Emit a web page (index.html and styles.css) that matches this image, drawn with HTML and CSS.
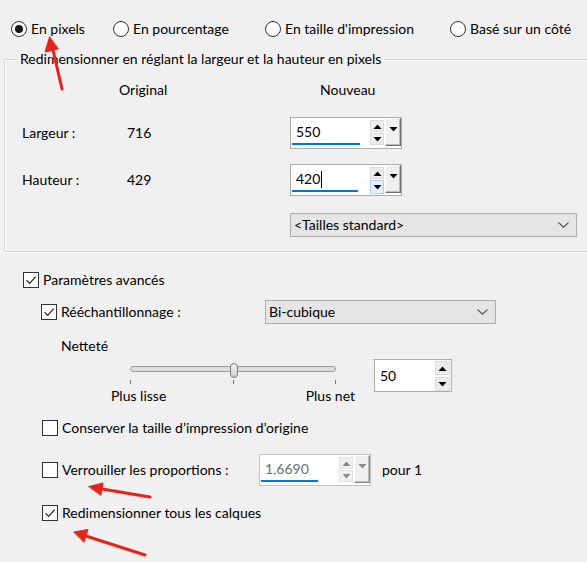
FILE: index.html
```html
<!DOCTYPE html>
<html lang="fr">
<head>
<meta charset="utf-8">
<title>Redimensionner</title>
<link rel="stylesheet" href="styles.css">
</head>
<body>
<div class="radios">
  <label class="radio-item"><span class="radio checked"></span><span>En pixels</span></label>
  <label class="radio-item"><span class="radio"></span><span>En pourcentage</span></label>
  <label class="radio-item"><span class="radio"></span><span>En taille d'impression</span></label>
  <label class="radio-item"><span class="radio"></span><span>Basé sur un côté</span></label>
</div>

<fieldset class="group">
  <legend class="group-title">Redimensionner en réglant la largeur et la hauteur en pixels</legend>
  <div class="dim-head">
    <span class="head-spacer"></span>
    <span class="head-orig">Original</span>
    <span class="head-new">Nouveau</span>
  </div>
  <div class="dim-row">
    <span class="dim-label">Largeur :</span>
    <span class="dim-orig">716</span>
    <div class="spin">
      <div class="spin-field"><span class="spin-text">550</span><span class="spin-line w68"></span></div>
      <div class="spin-btns">
        <span class="sbtn"><svg width="9" height="5" viewBox="0 0 9 5"><path d="M0.5 5 L4.5 0.5 L8.5 5 Z" fill="#000"/></svg></span>
        <span class="sbtn"><svg width="9" height="5" viewBox="0 0 9 5"><path d="M0.5 0 L4.5 4.5 L8.5 0 Z" fill="#000"/></svg></span>
      </div>
      <span class="drop-btn"><svg width="9" height="5" viewBox="0 0 9 5"><path d="M0.5 0 L4.5 4.5 L8.5 0 Z" fill="#000"/></svg></span>
    </div>
  </div>
  <div class="dim-row second">
    <span class="dim-label">Hauteur :</span>
    <span class="dim-orig">429</span>
    <div class="spin">
      <div class="spin-field"><span class="spin-text">420<span class="caret"></span></span><span class="spin-line w66"></span></div>
      <div class="spin-btns">
        <span class="sbtn"><svg width="9" height="5" viewBox="0 0 9 5"><path d="M0.5 5 L4.5 0.5 L8.5 5 Z" fill="#000"/></svg></span>
        <span class="sbtn hover"><svg width="9" height="5" viewBox="0 0 9 5"><path d="M0.5 0 L4.5 4.5 L8.5 0 Z" fill="#000"/></svg></span>
      </div>
      <span class="drop-btn"><svg width="9" height="5" viewBox="0 0 9 5"><path d="M0.5 0 L4.5 4.5 L8.5 0 Z" fill="#000"/></svg></span>
    </div>
  </div>
  <div class="combo std">
    <span>&lt;Tailles standard&gt;</span>
    <svg width="11" height="6" viewBox="0 0 11 6"><path d="M0.5 0.5 L5.5 5.2 L10.5 0.5" fill="none" stroke="#555" stroke-width="1.1"/></svg>
  </div>
</fieldset>

<div class="adv">
  <div class="cb-row">
    <span class="cb"><svg width="14" height="14" viewBox="0 0 14 14"><path d="M2.5 7.2 L5.6 10.3 L11.8 3.6" fill="none" stroke="#222" stroke-width="1.2"/></svg></span>
    <span>Paramètres avancés</span>
  </div>

  <div class="resample-row">
    <div class="cb-row resample-label">
      <span class="cb"><svg width="14" height="14" viewBox="0 0 14 14"><path d="M2.5 7.2 L5.6 10.3 L11.8 3.6" fill="none" stroke="#222" stroke-width="1.2"/></svg></span>
      <span>Rééchantillonnage :</span>
    </div>
    <div class="combo bicubic">
      <span>Bi-cubique</span>
      <svg width="11" height="6" viewBox="0 0 11 6"><path d="M0.5 0.5 L5.5 5.2 L10.5 0.5" fill="none" stroke="#555" stroke-width="1.1"/></svg>
    </div>
  </div>

  <div class="nettete">Netteté</div>

  <div class="slider-row">
    <div class="slider">
      <div class="track-area">
        <div class="track"></div>
        <span class="thumb"></span>
      </div>
      <div class="ticks"><span></span><span></span><span></span></div>
      <div class="slider-labels"><span>Plus lisse</span><span>Plus net</span></div>
    </div>
    <div class="spin small">
      <div class="spin-field"><span class="spin-text">50</span></div>
      <div class="spin-btns">
        <span class="sbtn"><svg width="9" height="5" viewBox="0 0 9 5"><path d="M0.5 5 L4.5 0.5 L8.5 5 Z" fill="#000"/></svg></span>
        <span class="sbtn"><svg width="9" height="5" viewBox="0 0 9 5"><path d="M0.5 0 L4.5 4.5 L8.5 0 Z" fill="#000"/></svg></span>
      </div>
    </div>
  </div>

  <div class="cb-row sub conserve">
    <span class="cb"></span>
    <span>Conserver la taille d’impression d’origine</span>
  </div>

  <div class="lock-row">
    <div class="cb-row lock-label">
      <span class="cb"></span>
      <span>Verrouiller les proportions :</span>
    </div>
    <div class="spin disabled">
      <div class="spin-field"><span class="spin-text">1,6690</span><span class="spin-line w57"></span></div>
      <div class="spin-btns">
        <span class="sbtn"><svg width="9" height="5" viewBox="0 0 9 5"><path d="M0.5 5 L4.5 0.5 L8.5 5 Z" fill="#8a8a8a"/></svg></span>
        <span class="sbtn"><svg width="9" height="5" viewBox="0 0 9 5"><path d="M0.5 0 L4.5 4.5 L8.5 0 Z" fill="#8a8a8a"/></svg></span>
      </div>
      <span class="drop-btn"><svg width="9" height="5" viewBox="0 0 9 5"><path d="M0.5 0 L4.5 4.5 L8.5 0 Z" fill="#8a8a8a"/></svg></span>
    </div>
    <span class="pour">pour 1</span>
  </div>

  <div class="cb-row sub all-layers">
    <span class="cb"><svg width="14" height="14" viewBox="0 0 14 14"><path d="M2.5 7.2 L5.6 10.3 L11.8 3.6" fill="none" stroke="#222" stroke-width="1.2"/></svg></span>
    <span>Redimensionner tous les calques</span>
  </div>
</div>

<svg class="arrows" width="587" height="562" viewBox="0 0 587 562">
  <g fill="#e5231b" stroke="#e5231b" stroke-linecap="round">
    <line x1="62" y1="89" x2="53" y2="50" stroke-width="3"/>
    <path d="M49.5 37 L45 52 L58 49 Z" stroke-width="1"/>
    <line x1="150" y1="497" x2="102" y2="489" stroke-width="3"/>
    <path d="M89 486.5 L103 483 L101 495 Z" stroke-width="1"/>
    <line x1="145" y1="555" x2="86" y2="536" stroke-width="3"/>
    <path d="M74 532 L88 529.5 L84 542 Z" stroke-width="1"/>
  </g>
</svg>
</body>
</html>
```

FILE: styles.css
```css
* { box-sizing: border-box; }

html, body {
  margin: 0;
  padding: 0;
}

body {
  width: 587px;
  height: 562px;
  overflow: hidden;
  position: relative;
  background: #f0f0f0;
  color: #000;
  font-family: "Lato", "Liberation Sans", sans-serif;
  font-size: 14px;
  line-height: 20px;
}

/* radios */
.radios {
  display: grid;
  grid-template-columns: 102px 152px 185px auto;
  padding: 19px 0 0 11px;
  height: 39px;
}
.radio-item {
  display: flex;
  align-items: center;
  gap: 4px;
  height: 20px;
}
.radio {
  width: 16px;
  height: 16px;
  border: 1px solid #333;
  border-radius: 50%;
  background: #fff;
  display: flex;
  align-items: center;
  justify-content: center;
  flex: none;
}
.radio.checked::after {
  content: "";
  width: 8px;
  height: 8px;
  border-radius: 50%;
  background: #1a1a1a;
}

/* group */
.group {
  margin: 10px 0 0 4px;
  padding: 0 0 14px 17px;
  border: 1px solid #d7d7d7;
  border-right: none;
  box-shadow: inset 1px 1px 0 #fff, 0 1px 0 #fff;
  min-width: 0;
}
.group-title {
  margin-left: -5px;
  padding: 0 3px;
  line-height: 20px;
}
.dim-head {
  display: flex;
  height: 20px;
  margin-top: 11px;
}
.head-spacer { width: 97px; }
.head-orig { width: 201px; }

.dim-row {
  display: flex;
  align-items: center;
  height: 32px;
  margin-top: 17px;
}
.dim-row.second { margin-top: 15px; }
.dim-label { width: 105px; }
.dim-orig { width: 163px; }

/* spin boxes */
.spin {
  display: flex;
  width: 112px;
  height: 32px;
  border: 1px solid #adadad;
  background: #fff;
  flex: none;
}
.spin-field {
  flex: 1;
  display: flex;
  flex-direction: column;
}
.spin-text {
  padding-left: 5px;
  margin-top: 4px;
  line-height: 20px;
  display: flex;
  align-items: center;
}
.caret {
  width: 1px;
  height: 17px;
  background: #000;
  margin-left: 1px;
}
.spin-line {
  height: 2px;
  margin: 1px 0 0 1px;
  background: #0078d7;
}
.w68 { width: 68px; }
.w66 { width: 66px; }
.w57 { width: 57px; }

.spin-btns {
  width: 14px;
  display: flex;
  flex-direction: column;
  gap: 1px;
  padding-top: 2px;
}
.sbtn {
  width: 14px;
  height: 12px;
  background: #ececec;
  border: 1px solid #dcdcdc;
  display: flex;
  align-items: center;
  justify-content: center;
}
.sbtn.hover {
  background: #e5f1fb;
  border-color: #a8cdef;
  height: 14px;
}
.drop-btn {
  width: 16px;
  height: 28px;
  margin: 0 0 0 1px;
  background: #f0f0f0;
  border-top: 1px solid #fff;
  border-left: 1px solid #fff;
  border-right: 1px solid #6e6e6e;
  border-bottom: 1px solid #6e6e6e;
  box-shadow: inset -1px -1px 0 #bcbcbc;
  display: flex;
  justify-content: center;
  padding-top: 8px;
}
.drop-btn svg { display: block; }

.spin.small {
  width: 78px;
  height: 33px;
  margin-left: 19px;
}
.spin.small .spin-text {
  padding-left: 5px;
  margin-top: 6px;
}
.spin.small .spin-btns {
  width: 15px;
  margin-right: 1px;
  gap: 2px;
  padding-top: 1px;
}
.spin.small .sbtn {
  width: 15px;
  height: 14px;
}

.spin.disabled {
  border-color: #c2c2c2;
}
.spin.disabled .spin-text { color: #6d6d6d; }
.spin.disabled .sbtn { background: #f0f0f0; border-color: #e2e2e2; }
.spin.disabled .drop-btn {
  border-right-color: #8a8a8a;
  border-bottom-color: #8a8a8a;
}

/* combos */
.combo {
  display: flex;
  align-items: center;
  justify-content: space-between;
  height: 24px;
  border: 1px solid #adadad;
  background: #e5e5e5;
  padding: 0 7px 0 3px;
}
.combo.std {
  margin: 17px 0 0 268px;
  width: 287px;
}
.combo.bicubic {
  width: 231px;
}

/* advanced */
.adv {
  padding-left: 23px;
}
.cb-row {
  display: flex;
  align-items: center;
  gap: 4px;
  height: 20px;
}
.adv > .cb-row:first-child { margin-top: 18px; }
.cb {
  width: 16px;
  height: 16px;
  border: 1px solid #333;
  background: #fff;
  display: flex;
  align-items: center;
  justify-content: center;
  flex: none;
}
.cb svg { display: block; }

.resample-row {
  display: flex;
  align-items: center;
  height: 24px;
  margin-top: 10px;
  padding-left: 18px;
}
.resample-label { width: 224px; }

.nettete {
  height: 20px;
  margin-top: 12px;
  padding-left: 38px;
}

.slider-row {
  display: flex;
  align-items: flex-start;
  margin-top: 3px;
  padding-left: 88px;
}
.slider {
  width: 244px;
}
.track-area {
  position: relative;
  height: 20px;
  padding: 7px 19px 0;
}
.track {
  height: 6px;
  border: 1px solid #9c9c9c;
  border-radius: 3px;
  background: #dedede;
}
.thumb {
  position: absolute;
  left: 119px;
  top: 4px;
  width: 8px;
  height: 15px;
  border: 1px solid #7a7a7a;
  border-radius: 4px;
  background: linear-gradient(#f4f4f4, #cfcfcf);
}
.ticks {
  display: flex;
  justify-content: space-between;
  margin: 1px 19px 0;
  height: 4px;
}
.ticks span {
  width: 1px;
  height: 4px;
  background: #777;
}
.slider-labels {
  display: flex;
  justify-content: space-between;
  margin-top: 5px;
  line-height: 14px;
}

.cb-row.sub { padding-left: 19px; }
.conserve { margin-top: 15px; }

.lock-row {
  display: flex;
  align-items: center;
  height: 32px;
  margin-top: 16px;
}
.lock-label {
  padding-left: 19px;
  width: 236px;
}
.pour { margin-left: 11px; }

.all-layers { margin-top: 17px; }

/* annotation arrows */
.arrows {
  position: absolute;
  left: 0;
  top: 0;
  pointer-events: none;
}
```
